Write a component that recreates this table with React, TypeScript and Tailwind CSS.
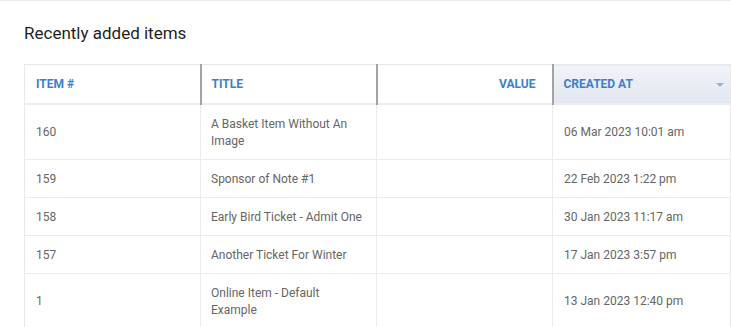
import React from "react";

interface Item {
  id: string;
  title: string;
  value: string;
  createdAt: string;
}

const items: Item[] = [
  { id: "160", title: "A Basket Item Without An Image", value: "", createdAt: "06 Mar 2023 10:01 am" },
  { id: "159", title: "Sponsor of Note #1", value: "", createdAt: "22 Feb 2023 1:22 pm" },
  { id: "158", title: "Early Bird Ticket - Admit One", value: "", createdAt: "30 Jan 2023 11:17 am" },
  { id: "157", title: "Another Ticket For Winter", value: "", createdAt: "17 Jan 2023 3:57 pm" },
  { id: "1", title: "Online Item - Default Example", value: "", createdAt: "13 Jan 2023 12:40 pm" },
];

export default function App() {
  return (
    <div
      className="min-h-[327px] bg-white border-t border-[#ececec]"
      style={{ fontFamily: "Roboto, 'Liberation Sans', sans-serif" }}
    >
      <div className="pl-6 pt-[20px]">
        <h2 className="text-[17px] leading-6 text-[#1f1f1f] mb-[19px]">
          Recently added items
        </h2>

        <table className="table-fixed border-collapse w-[706px] border border-[#e8e8e8]">
          <colgroup>
            <col className="w-[176px]" />
            <col className="w-[176px]" />
            <col className="w-[176px]" />
            <col className="w-[178px]" />
          </colgroup>
          <thead>
            <tr className="h-[39px] border-b-2 border-[#eeeeee] text-[12px] font-bold uppercase text-[#3d7fcc]">
              <th className="text-left pl-[11px] font-bold">Item #</th>
              <th className="text-left pl-[10px] border-l-2 border-l-[#a3a3a3] font-bold">Title</th>
              <th className="text-right pr-4 border-l-2 border-l-[#a3a3a3] font-bold">Value</th>
              <th className="relative text-left pl-[10px] border-l-2 border-l-[#a3a3a3] font-bold bg-gradient-to-b from-[#f0f3f8] to-[#e2e6ee]">
                Created at
                <span className="absolute right-[6px] top-[18px] w-0 h-0 border-l-[4px] border-r-[4px] border-t-[4px] border-l-transparent border-r-transparent border-t-[#90b3e0]" />
              </th>
            </tr>
          </thead>
          <tbody className="text-[12px] leading-[17px] text-[#666666]">
            {items.map((item) => (
              <tr key={item.id} className="border-b border-[#ececec]">
                <td className="pl-[11px] pt-[11px] pb-[9px] align-middle">{item.id}</td>
                <td className="pl-[10px] pr-[12px] pt-[11px] pb-[9px] border-l border-[#ececec]">{item.title}</td>
                <td className="pr-4 pt-[11px] pb-[9px] text-right border-l border-[#ececec]">{item.value}</td>
                <td className="pl-[11px] pt-[11px] pb-[9px] border-l border-[#ececec]">{item.createdAt}</td>
              </tr>
            ))}
          </tbody>
        </table>
      </div>
    </div>
  );
}
